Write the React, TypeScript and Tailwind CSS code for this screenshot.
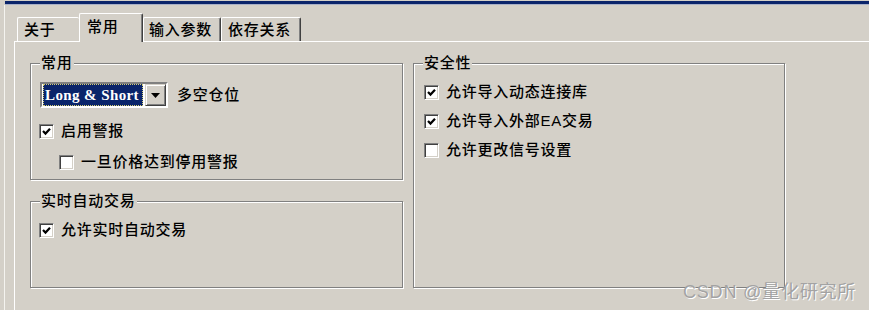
import type { ReactNode } from 'react';

const FONT = "font-['Liberation_Sans','Noto_Sans_CJK_SC',sans-serif]";

function CheckBox({ checked }: { checked?: boolean }) {
  return (
    <span className="flex h-[15px] w-[15px] shrink-0 items-center justify-center border border-t-[#808080] border-l-[#808080] border-b-white border-r-white bg-white shadow-[inset_1px_1px_0_#404040,inset_-1px_-1px_0_#d4d0c8]">
      {checked && (
        <svg width="11" height="11" viewBox="0 0 11 11" aria-hidden="true">
          <polyline points="2,5 4.5,7.6 9,2.8" fill="none" stroke="#000" strokeWidth="2.2" />
        </svg>
      )}
    </span>
  );
}

function Option({ label, checked, className }: { label: string; checked?: boolean; className?: string }) {
  return (
    <div className={`flex h-[20px] items-center gap-[7px] ${className ?? ''}`}>
      <CheckBox checked={checked} />
      <span className="whitespace-nowrap">{label}</span>
    </div>
  );
}

// classic etched group box, caption sits on the top edge
function Group({
  title,
  className,
  bodyClass,
  children,
}: {
  title: string;
  className?: string;
  bodyClass?: string;
  children: ReactNode;
}) {
  return (
    <div
      className={`flex flex-col border border-[#808080] shadow-[1px_1px_0_#ffffff,inset_1px_1px_0_#ffffff] ${className ?? ''}`}
    >
      <div className="-mt-[10px] ml-[9px] w-fit bg-[#d4d0c8] px-[1px] leading-[18px]">{title}</div>
      <div className={`flex flex-col ${bodyClass ?? ''}`}>{children}</div>
    </div>
  );
}

function Tab({ label, className }: { label: string; className?: string }) {
  return (
    <div
      className={`flex h-[24px] items-center rounded-t-[2px] border-t border-l border-white pt-[1px] ${className ?? ''}`}
    >
      {label}
    </div>
  );
}

export default function App() {
  return (
    <div
      className={`relative flex h-[310px] w-[869px] flex-col overflow-hidden bg-[#d4d0c8] text-[15px] font-medium tracking-[0.75px] text-black ${FONT}`}
    >
      <div className="ml-[5px] mt-[1px] h-[3px] bg-[#0a246a]" />
      <div className="ml-[5px] h-[1px] bg-[#a9b1c8]" />

      <div className="flex flex-1">
        <div className="ml-[4px] w-[1px] bg-[#f4f3ef]" />

        <div className="ml-[9px] flex flex-1 flex-col">
          {/* tab strip */}
          <div className="mt-[8px] flex h-[28px] items-end pl-[3px]">
            <Tab label="关于" className="w-[62px] pl-[6px]" />
            <div className="relative z-10 -mb-[1px] flex h-[29px] w-[64px] items-center rounded-t-[2px] border-t border-l border-r border-t-white border-l-white border-r-[#404040] bg-[#d4d0c8] pb-[1px] pl-[7px] shadow-[inset_-1px_0_0_#808080]">
              常用
            </div>
            <Tab
              label="输入参数"
              className="w-[78px] border-r border-r-[#404040] pl-[5px] shadow-[inset_-1px_0_0_#808080]"
            />
            <Tab
              label="依存关系"
              className="w-[80px] border-r border-r-[#404040] pl-[6px] shadow-[inset_-1px_0_0_#808080]"
            />
          </div>

          {/* page */}
          <div className="flex flex-1 gap-[10px] border-t border-l border-white pl-[15px] pt-[21px]">
            <div className="flex w-[373px] flex-col gap-[21px]">
              <Group title="常用" className="h-[117px]" bodyClass="pl-[8px]">
                <div className="mt-[10px] flex items-center gap-[9px]">
                  <div className="ml-[1px] flex h-[26px] w-[128px] gap-[2px] border-2 border-t-[#808080] border-l-[#808080] border-b-white border-r-white bg-white pl-[1px]">
                    <div className="flex w-[100px] items-center border border-dotted border-[#d8cf74] bg-[#0a246a] pl-[1px] font-['Liberation_Serif',serif] text-[15px] font-bold tracking-[0.4px] text-white">
                      Long &amp; Short
                    </div>
                    <div className="flex w-[21px] items-center justify-center border border-t-[#d4d0c8] border-l-[#d4d0c8] border-b-[#404040] border-r-[#404040] bg-[#d4d0c8] shadow-[inset_1px_1px_0_#ffffff,inset_-1px_-1px_0_#808080]">
                      <svg width="9" height="5" viewBox="0 0 9 5" aria-hidden="true">
                        <polygon points="0,0 9,0 4.5,5" fill="#000" />
                      </svg>
                    </div>
                  </div>
                  <span>多空仓位</span>
                </div>
                <Option label="启用警报" checked className="mt-[13px]" />
                <Option label="一旦价格达到停用警报" className="ml-[20px] mt-[11px]" />
              </Group>

              <Group title="实时自动交易" className="h-[87px]" bodyClass="pl-[8px]">
                <Option label="允许实时自动交易" checked className="mt-[10px]" />
              </Group>
            </div>

            <Group title="安全性" className="h-[225px] w-[372px]" bodyClass="mt-[10px] gap-[9px] pl-[10px]">
              <Option label="允许导入动态连接库" checked />
              <Option label="允许导入外部EA交易" checked />
              <Option label="允许更改信号设置" />
            </Group>
          </div>
        </div>
      </div>

      <div className="absolute left-[683px] top-[279px] text-[18px] font-normal tracking-[0.8px] text-[#a3a3a3] [text-shadow:1px_1px_0_#ffffff]">
        CSDN @量化研究所
      </div>
    </div>
  );
}
